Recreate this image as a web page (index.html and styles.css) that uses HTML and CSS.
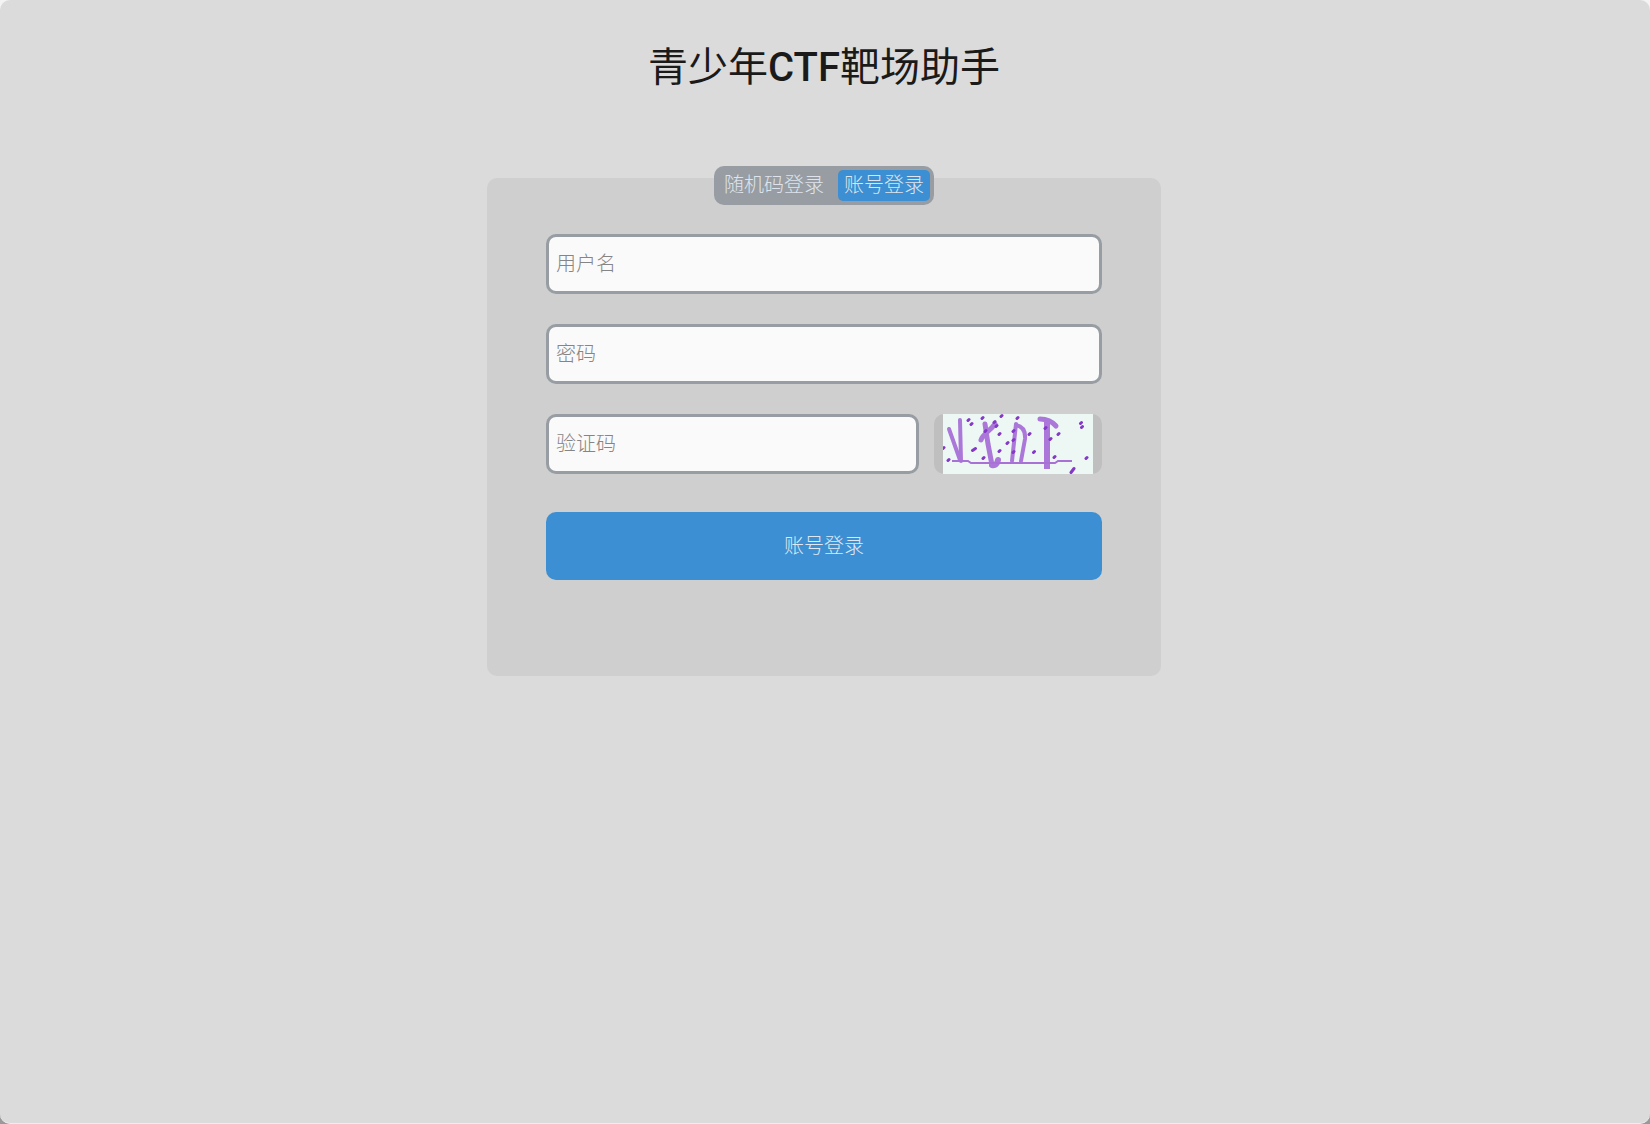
FILE: index.html
```html
<!DOCTYPE html>
<html lang="zh-CN">
<head>
    <meta charset="UTF-8">
    <meta name="viewport" content="width=device-width, initial-scale=1.0">
    <title>青少年CTF靶场助手</title>
    <link rel="stylesheet" href="styles.css">
</head>
<body>

    <div class="window">
        <h1 class="title">青少年<span class="latin">CTF</span>靶场助手</h1>

        <main class="card">
            <div class="tabs">
                <button type="button" class="tab">随机码登录</button>
                <button type="button" class="tab active">账号登录</button>
            </div>

            <form class="login_form">
                <input class="field" type="text" placeholder="用户名" aria-label="用户名">
                <input class="field" type="password" placeholder="密码" aria-label="密码">
                <div class="captcha_row">
                    <input class="field" type="text" placeholder="验证码" aria-label="验证码">
                    <button type="button" class="captcha" aria-label="刷新验证码">
                        <svg width="150" height="60" viewBox="0 0 150 60">
                            <defs>
                                <filter id="soft">
                                    <feGaussianBlur stdDeviation="0.6"/>
                                </filter>
                            </defs>
                            <rect width="150" height="60" fill="#edf8f4"/>
                            <!-- strokes -->
                            <g fill="none" stroke="#ab78d9" stroke-width="4" stroke-linecap="round" stroke-linejoin="round" filter="url(#soft)">
                                <path d="M6 15L17 46"/>
                                <path d="M17 6L18 47"/>
                                <path d="M42 10L45 30L49 51" stroke-width="5"/>
                                <path d="M38 26C40 20 47 17 52 10" stroke-width="5"/>
                                <path d="M49 51Q54 52 55 46" stroke-width="6"/>
                                <path d="M69 47L73 10"/>
                                <path d="M73 11Q83 13 82 25L78 47"/>
                                <path d="M97 5Q107 5 113 12" stroke-width="5"/>
                                <path d="M104 10V52" stroke-width="6" stroke-linecap="square"/>
                            </g>
                            <path d="M9 47H25L28 49H112L115 47H129" fill="none" stroke="#a771d6" stroke-width="2" filter="url(#soft)"/>
                            <!-- noise dots -->
                            <path d="M25 6.500l1-1M28 10.500l1-1M39 4.500l1-1M58 2.500l1-1M74 4.500l1-1M51 8.500l1-1M53 12.500l1-1M42 17.500l1-1M56 20.500l1-1M64 29.500l1-1M56 37.500l1-1M40 44.500l1-1M29.500 36.500l3-2M5 46.500l1-1M0 34.500l1-1M70 17.500l1-1M70 26.500l1-1M70 38.500l1-1M86 20.500l1-1M90.500 38.500l1-1M102 14.500l1-1M107 25.500l1-1M115 20.500l1-1M111 43.500l1-1M137.500 9.500l1-1M138.500 13.500l1-1M143 44.500l1-1M128 58.500l3-4" fill="none" stroke="#8438c8" stroke-width="3" stroke-linecap="round" filter="url(#soft)"/>
                        </svg>
                    </button>
                </div>
                <button type="submit" class="submit">账号登录</button>
            </form>
        </main>
    </div>

</body>
</html>
```
FILE: styles.css
```css
* {
    box-sizing: border-box;
}
body {
    margin: 0;
    background: linear-gradient(#f4f4f4, #999);
    font-family: Roboto, "Noto Sans CJK SC", sans-serif;
    font-size: 20px;
    font-weight: 300;
}
button,
input {
    font: inherit;
}
button {
    border: none;
    cursor: pointer;
}
.window {
    display: flex;
    flex-direction: column;
    align-items: center;
    min-height: 100vh;
    padding: 38px 22px 38px 20px;
    border-bottom: 1px solid #eee;
    border-radius: 10px;
    background: #dbdbdb;
}
.title {
    margin: 0;
    color: #1a1a1a;
    font-size: 40px;
    font-weight: 400;
    line-height: 60px;
}
.title .latin {
    font-weight: 500;
}
.card {
    display: flex;
    flex-direction: column;
    align-items: center;
    width: 100%;
    max-width: 674px;
    margin-top: 80px;
    padding: 0 59px 96px;
    border-radius: 10px;
    background: #cfcfcf;
}
/* login switch, sits across the top edge of the card */
.tabs {
    display: flex;
    gap: 8px;
    margin-top: -12px;
    padding: 4px;
    border-radius: 10px;
    background: #979da2;
}
.tab {
    padding: 0 6px;
    border-radius: 5px;
    background: none;
    color: #dfe4ec;
    line-height: 31px;
}
.tab.active {
    background: #3c8fd2;
}
.login_form {
    display: flex;
    flex-direction: column;
    gap: 30px;
    width: 100%;
    margin-top: 29px;
}
.field {
    width: 100%;
    min-width: 0;
    height: 60px;
    padding: 0 7px;
    border: 3px solid #979da2;
    border-radius: 10px;
    outline: none;
    background: #fafafa;
    color: #222;
}
.field::placeholder {
    color: #858585;
}
.captcha_row {
    display: flex;
    gap: 15px;
}
.captcha {
    flex: none;
    height: 60px;
    padding: 0 9px;
    border-radius: 10px;
    background: #bfbfbf;
}
.captcha svg {
    display: block;
}
.submit {
    height: 68px;
    margin-top: 8px;
    padding-bottom: 4px;
    border-radius: 10px;
    background: #3c8fd2;
    color: #dfe8f2;
}
```
